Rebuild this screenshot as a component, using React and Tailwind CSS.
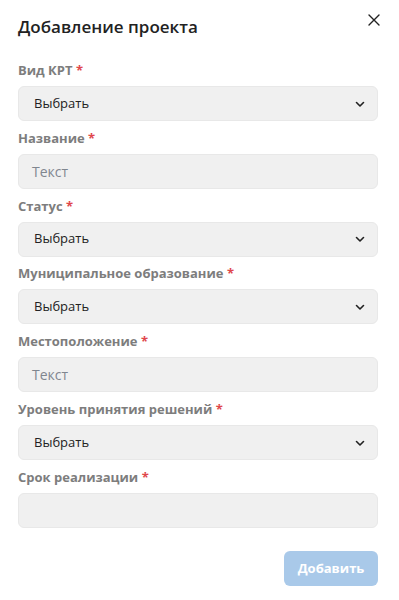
import React from "react";

const font = { fontFamily: '"Open Sans", "Noto Sans", sans-serif' };

function Chevron() {
  return (
    <svg width="10" height="10" viewBox="0 0 10 10" fill="none" className="absolute right-[12px] top-1/2 -translate-y-1/2">
      <path d="M1.5 3.5 L5 7 L8.5 3.5" stroke="#222" strokeWidth="1.6" strokeLinecap="round" strokeLinejoin="round" />
    </svg>
  );
}

function Field({ label, type }) {
  return (
    <div className="flex flex-col gap-[7px]">
      <div className="text-[13px] leading-[18px] font-bold text-[#7d7d7d]">
        {label} <span className="text-[#e0474c]">*</span>
      </div>
      <div className="relative h-[35px] rounded-[6px] bg-[#f0f0f0] border border-[#e8e8e8] flex items-center text-[13px]">
        {type === "select" && <span className="pl-[15px] text-[#222]">Выбрать</span>}
        {type === "text" && <span className="pl-[13px] text-[14px] text-[#80868f]">Текст</span>}
        {type === "select" && <Chevron />}
      </div>
    </div>
  );
}

export default function App() {
  return (
    <div className="w-[399px] h-[600px] bg-white relative pl-[18px] pr-[21px] pt-[15px]" style={font}>
      <button className="absolute right-[19px] top-[14px] w-[12px] h-[12px]">
        <svg width="12" height="12" viewBox="0 0 12 12">
          <path d="M1 1 L11 11 M11 1 L1 11" stroke="#222" strokeWidth="1.4" strokeLinecap="round" />
        </svg>
      </button>
      <div className="text-[17px] leading-[24px] font-semibold text-[#222]">Добавление проекта</div>
      <div className="mt-[22px] flex flex-col gap-[7.84px]">
        <Field label="Вид КРТ" type="select" />
        <Field label="Название" type="text" />
        <Field label="Статус" type="select" />
        <Field label="Муниципальное образование" type="select" />
        <Field label="Местоположение" type="text" />
        <Field label="Уровень принятия решений" type="select" />
        <Field label="Срок реализации" type="empty" />
      </div>
      <div className="mt-[23px] flex justify-end">
        <button className="h-[35px] w-[94px] rounded-[6px] bg-[#a9c9e9] text-white font-bold text-[13px]">Добавить</button>
      </div>
    </div>
  );
}
